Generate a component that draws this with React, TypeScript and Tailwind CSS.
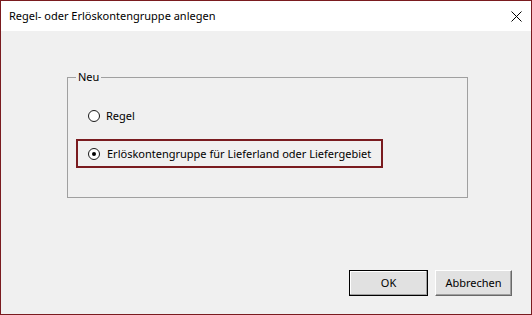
import React from "react";

const font = { fontFamily: '"Noto Sans", "Segoe UI", Arial, sans-serif' };

function Radio({ checked }: { checked?: boolean }) {
  return (
    <span className="w-[12px] h-[12px] rounded-full border border-[#1a1a1a] bg-white flex items-center justify-center shrink-0">
      {checked && <span className="w-[4px] h-[4px] rounded-full bg-black" />}
    </span>
  );
}

export default function App() {
  return (
    <div
      className="w-[532px] h-[315px] border border-[#7a1b1f] bg-[#f0f0f0] flex flex-col text-[11px] text-black whitespace-nowrap"
      style={font}
    >
      <div className="h-[30px] bg-white flex items-center justify-between pl-[8px] pr-[9px] shrink-0">
        <span className="leading-[16px] text-[11px]">Regel- oder Erlöskontengruppe anlegen</span>
        <svg width="11" height="11" viewBox="0 0 11 11" className="mt-[1px]">
          <path d="M0.5 0.5 L10.5 10.5 M10.5 0.5 L0.5 10.5" stroke="#000" strokeWidth="1" />
        </svg>
      </div>
      <div className="flex-1 flex flex-col">
        <fieldset className="ml-[66px] mt-[38px] w-[401px] border border-[#a0a0a0] pb-[29px]">
          <legend className="ml-[8px] px-[2px] leading-[16px]">Neu</legend>
          <div className="flex flex-col">
            <label className="flex items-center gap-[6px] ml-[20px] mt-[23px] h-[16px] leading-[16px]">
              <Radio />
              <span>Regel</span>
            </label>
            <label className="ml-[8px] mt-[15px] w-[307px] h-[29px] border-2 border-[#7a1b1f] flex items-center gap-[7px] pl-[10px] leading-[16px]">
              <Radio checked />
              <span>Erlöskontengruppe für Lieferland oder Liefergebiet</span>
            </label>
          </div>
        </fieldset>
        <div className="mt-auto flex justify-end gap-[7px] pr-[19px] pb-[18px]">
          <button className="w-[79px] h-[26px] border border-black bg-[#e1e1e1] shadow-[inset_-1px_-1px_0_#a0a0a0,inset_1px_1px_0_#ffffff] leading-[16px]">
            OK
          </button>
          <button className="w-[77px] h-[26px] border border-t-white border-l-white border-b-[#696969] border-r-[#696969] bg-[#e1e1e1] shadow-[inset_-1px_-1px_0_#a0a0a0] leading-[16px]">
            Abbrechen
          </button>
        </div>
      </div>
    </div>
  );
}
